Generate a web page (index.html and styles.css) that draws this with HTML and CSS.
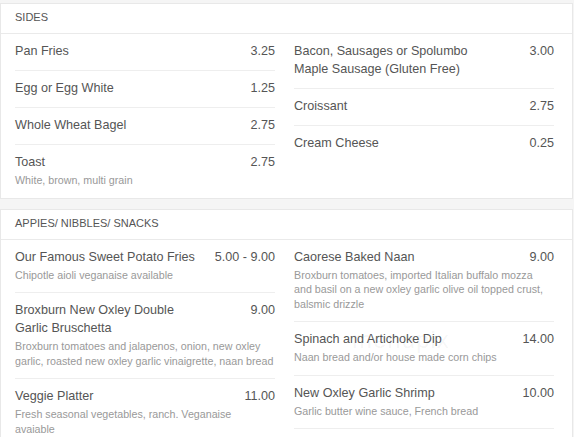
FILE: index.html
```html
<!DOCTYPE html>
<html lang="en">
<head>
<meta charset="utf-8">
<title>Menu</title>
<link rel="stylesheet" href="styles.css">
</head>
<body>
<section class="card">
  <h2 class="card-title">Sides</h2>
  <div class="cols">
    <ul class="col">
      <li class="item"><div class="row"><span class="name">Pan Fries</span><span class="price">3.25</span></div></li>
      <li class="item"><div class="row"><span class="name">Egg or Egg White</span><span class="price">1.25</span></div></li>
      <li class="item"><div class="row"><span class="name">Whole Wheat Bagel</span><span class="price">2.75</span></div></li>
      <li class="item"><div class="row"><span class="name">Toast</span><span class="price">2.75</span></div><p class="desc">White, brown, multi grain</p></li>
    </ul>
    <ul class="col">
      <li class="item"><div class="row"><span class="name">Bacon, Sausages or Spolumbo Maple Sausage (Gluten Free)</span><span class="price">3.00</span></div></li>
      <li class="item"><div class="row"><span class="name">Croissant</span><span class="price">2.75</span></div></li>
      <li class="item"><div class="row"><span class="name">Cream Cheese</span><span class="price">0.25</span></div></li>
    </ul>
  </div>
</section>
<section class="card">
  <h2 class="card-title">Appies/ Nibbles/ Snacks</h2>
  <div class="cols">
    <ul class="col">
      <li class="item"><div class="row"><span class="name">Our Famous Sweet Potato Fries</span><span class="price">5.00 - 9.00</span></div><p class="desc">Chipotle aioli veganaise available</p></li>
      <li class="item"><div class="row"><span class="name">Broxburn New Oxley Double Garlic Bruschetta</span><span class="price">9.00</span></div><p class="desc">Broxburn tomatoes and jalapenos, onion, new oxley garlic, roasted new oxley garlic vinaigrette, naan bread</p></li>
      <li class="item"><div class="row"><span class="name">Veggie Platter</span><span class="price">11.00</span></div><p class="desc">Fresh seasonal vegetables, ranch. Veganaise<br>avaiable</p></li>
    </ul>
    <ul class="col">
      <li class="item"><div class="row"><span class="name">Caorese Baked Naan</span><span class="price">9.00</span></div><p class="desc">Broxburn tomatoes, imported Italian buffalo mozza<br>and basil on a new oxley garlic olive oil topped crust, balsmic drizzle</p></li>
      <li class="item"><div class="row"><span class="name">Spinach and Artichoke Dip</span><span class="price">14.00</span></div><p class="desc">Naan bread and/or house made corn chips</p></li>
      <li class="item item-more"><div class="row"><span class="name">New Oxley Garlic Shrimp</span><span class="price">10.00</span></div><p class="desc">Garlic butter wine sauce, French bread</p></li>
    </ul>
  </div>
</section>
<div class="watermark">menupix</div>
</body>
</html>
```
FILE: styles.css
```css
html, body {
  margin: 0;
  padding: 0;
}
body {
  background: #f5f5f5;
  font-family: "Liberation Sans", Arial, sans-serif;
  color: #555;
  padding-top: 3px;
  overflow: hidden;
  height: 437px;
  position: relative;
}
.card {
  width: 573px;
  box-sizing: border-box;
  background: #fff;
  border: 1px solid #e8e8e8;
  margin-bottom: 10px;
}
.card-title {
  margin: 0;
  padding: 7px 14px 9px;
  font-size: 11px;
  line-height: 13px;
  font-weight: normal;
  text-transform: uppercase;
  color: #555;
  border-bottom: 1px solid #eaeaea;
}
.cols {
  display: flex;
  gap: 19px;
  padding-left: 14px;
}
.col {
  list-style: none;
  margin: 0;
  padding: 0;
  width: 260px;
}
.item {
  padding: 8px 0 10px;
  border-bottom: 1px solid #eeeeee;
}
.item:last-child {
  border-bottom: none;
}
.item.item-more {
  border-bottom: 1px solid #eeeeee;
}
.row {
  display: flex;
  justify-content: space-between;
  align-items: flex-start;
  font-size: 12.6px;
  line-height: 18px;
  color: #555;
}
.name {
  width: 195px;
}
.price {
  text-align: right;
  white-space: nowrap;
}
.desc {
  margin: 2px 0 0;
  font-size: 10.7px;
  line-height: 14.5px;
  color: #999;
}
.watermark {
  position: absolute;
  left: 352px;
  top: 326px;
  font-size: 24px;
  letter-spacing: 1px;
  color: rgba(0, 0, 0, 0.05);
  pointer-events: none;
}
```
